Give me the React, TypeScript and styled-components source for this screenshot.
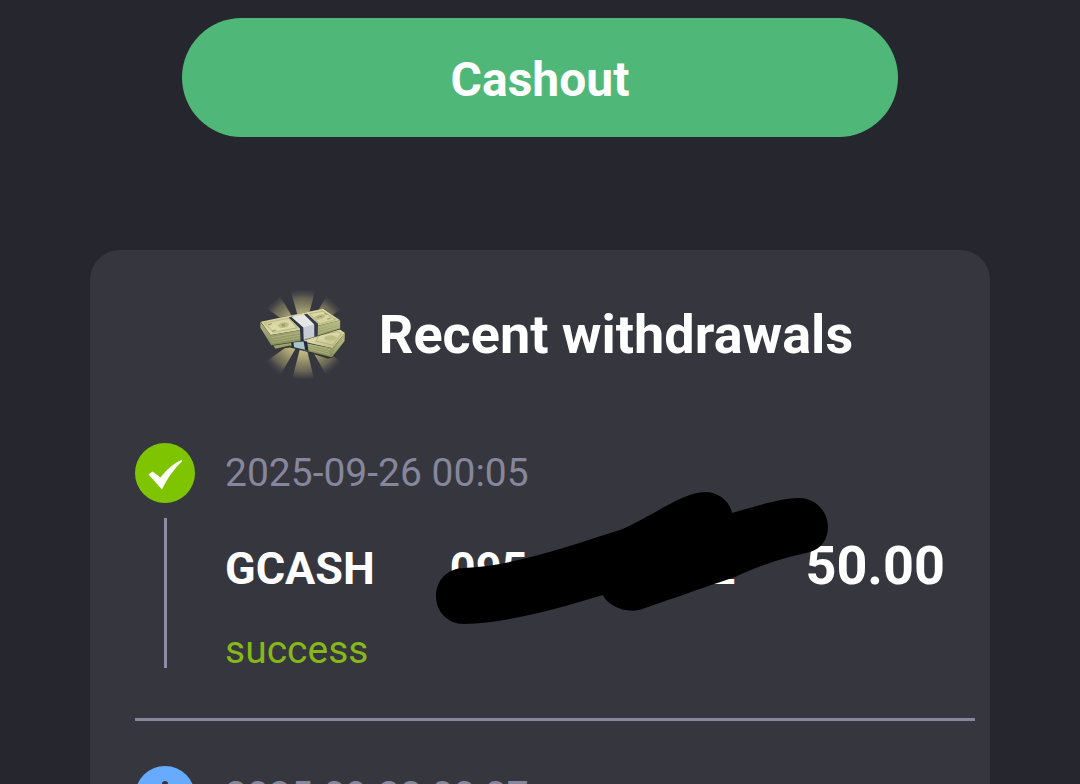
import React from "react";
import styled, { createGlobalStyle } from "styled-components";

const GlobalStyle = createGlobalStyle`
  * { box-sizing: border-box; }
  html { scrollbar-width: none; background: #26262f; }
  body {
    margin: 0;
    background: #26262f;
    color: #ffffff;
    font-family: Roboto, "Liberation Sans", sans-serif;
  }
`;

const Screen = styled.main`
  display: flex;
  flex-direction: column;
  align-items: center;
  height: 100vh;
  padding: 18px 90px 0;
  overflow: hidden;
`;

const CashoutButton = styled.button`
  flex: none;
  width: 100%;
  max-width: 716px;
  height: 119px;
  padding: 4px 0 0;
  border: 0;
  border-radius: 60px;
  background: #4fb878;
  color: #ffffff;
  font: 700 48px/56px Roboto, "Liberation Sans", sans-serif;
  cursor: pointer;
`;

const Card = styled.section`
  flex: none;
  width: 100%;
  margin-top: 113px;
  padding: 40px 15px 45px 45px;
  border-radius: 30px;
  background: #36363f;
`;

const CardHeader = styled.header`
  display: flex;
  align-items: center;
  justify-content: center;
  gap: 30px;
  height: 90px;
`;

const Title = styled.h2`
  margin: 0;
  font-size: 54px;
  font-weight: 700;
  line-height: 64px;
  white-space: nowrap;
`;

const List = styled.ul`
  margin: 63px 0 0;
  padding: 0;
  list-style: none;
`;

const Item = styled.li`
  display: flex;
  gap: 30px;
  margin-bottom: 45px;
  padding-bottom: 50px;
  border-bottom: 3px solid #86869c;
`;

const Rail = styled.div`
  display: flex;
  flex: none;
  flex-direction: column;
  align-items: center;
  gap: 15px;
  width: 60px;
`;

const RailLine = styled.div`
  width: 3px;
  height: 150px;
  background: #8c8ca6;
`;

const Details = styled.div`
  flex: 1;
  padding-right: 30px;
`;

const DateText = styled.time`
  display: block;
  color: #86869c;
  font-size: 39px;
  line-height: 60px;
`;

const Payment = styled.div`
  display: flex;
  align-items: baseline;
  height: 64px;
  margin-top: 31px;
  font-size: 45px;
  font-weight: 700;
  line-height: 64px;
`;

const Account = styled.span`
  position: relative;
  display: flex;
  justify-content: space-between;
  width: 286px;
  margin-left: 75px;
`;

const Redaction = styled.svg`
  position: absolute;
  top: -47px;
  left: -16px;
  width: 396px;
  height: 136px;
`;

const Amount = styled.span`
  margin-left: auto;
  font-size: 54px;
`;

const Status = styled.p`
  margin: 34px 0 0;
  color: #86b817;
  font-size: 39px;
  line-height: 36px;
`;

function MoneyIcon() {
  return (
    <svg width="92" height="92" viewBox="54 30 270 270" aria-hidden="true">
      <defs>
        <radialGradient id="ray" gradientUnits="userSpaceOnUse" cx="190" cy="165" r="135">
          <stop offset="0" stopColor="#f2edaa" />
          <stop offset="0.5" stopColor="#a8a373" />
          <stop offset="0.8" stopColor="#77745d" stopOpacity="0.75" />
          <stop offset="1" stopColor="#4b4a48" stopOpacity="0.1" />
        </radialGradient>
        <linearGradient id="billTop" x1="0" y1="0" x2="1" y2="1">
          <stop offset="0" stopColor="#c8c894" />
          <stop offset="0.5" stopColor="#dedbac" />
          <stop offset="1" stopColor="#b9b982" />
        </linearGradient>
        <linearGradient id="billSide" x1="0" y1="0" x2="0" y2="1">
          <stop offset="0" stopColor="#b4b880" />
          <stop offset="1" stopColor="#868d5e" />
        </linearGradient>
      </defs>
      <g fill="url(#ray)">
        <path d="M190 165 152 34 225 34Z" />
        <path d="M190 165 158 292 221 292Z" />
        <path d="M190 165 82 86 122 52Z" />
        <path d="M190 165 258 52 300 90Z" />
        <path d="M190 165 78 244 122 284Z" />
        <path d="M190 165 258 284 302 244Z" />
      </g>
      <path d="M100 192 185 168 298 150 314 160 313 186 276 232 262 235 195 213 150 202 108 207Z" fill="#35382d" />
      <path d="M102 188 190 164 296 148 312 159 276 204 188 184Z" fill="url(#billTop)" />
      <path d="M98 190 155 181 276 204 312 159 311 183 274 230 190 209 150 196 108 205Z" fill="url(#billSide)" />
      <path d="m202 192 68 17m-68-11 66 18m-66-11 66 17m12-13 30-37m-31 45 30-38" fill="none" stroke="#c4c78e" strokeWidth="2" opacity="0.7" />
      <path d="m236 166 56-11 10 6-25 34-50-12Z" fill="none" stroke="#b5b47c" strokeWidth="3" />
      <ellipse cx="269" cy="174" rx="18" ry="8" fill="#bebd86" />
      <path d="m153 184 9-7 39 7 4 28-17-3-32-9Z" fill="#222a3d" />
      <path d="m160 182 31 3 4 23-32-7Z" fill="#a8c7c8" />
      <path d="M61 136 95 197 182 184 299 148 299 122 250 88 68 125Z" fill="#3a3d2d" />
      <path d="m65 126 183-38 50 34-109 27-95 16Z" fill="url(#billTop)" />
      <path d="m64 127 30 39 97-17 107-27v24l-109 35-93 14-32-51Z" fill="url(#billSide)" />
      <path d="m96 173 88-16m-88 24 88-16m-87 23 87-16M234 144l62-17m-62 25 62-18m-62 26 62-19" fill="none" stroke="#c9ca95" strokeWidth="2" opacity="0.6" />
      <path d="m76 130 71-14 25 28-70 13Z" fill="none" stroke="#bab881" strokeWidth="3" />
      <path d="m209 103 38-8 37 25-47 13Z" fill="none" stroke="#bab881" strokeWidth="3" />
      <ellipse cx="132" cy="136" rx="16" ry="8" fill="#bebc85" transform="rotate(-9 132 136)" />
      <path d="m126 132 10 8m-9 0 9-9M86 135l12-3m0 21 12-3" stroke="#9c9a62" strokeWidth="3" />
      <ellipse cx="238" cy="112" rx="17" ry="7" fill="#bebc85" transform="rotate(-15 238 112)" />
      <path d="m230 114 16-5m6-8 8 5m0 13 10-3" stroke="#9c9a62" strokeWidth="3" />
      <path d="m147 114 13-3 31 32 1 38-10 3-2-38Z" fill="#2d3542" />
      <path d="m191 105 10-2 32 29-1 35-10 4-2-38Z" fill="#343a46" />
      <path d="m155 112 37-7 30 29-32 9Z" fill="#e4e7e5" />
      <path d="m190 143 32-9v36l-31 8Z" fill="#c6cbd5" />
    </svg>
  );
}

function SuccessIcon() {
  return (
    <svg width="60" height="60" viewBox="0 0 60 60" role="img" aria-label="Success">
      <circle cx="30" cy="30" r="30" fill="#7fc400" />
      <path d="M13.5 31.5 17.5 28.5 25.5 34.5 C31 27.5 38 20.5 46.5 17 L47 18.5 C40 25 33 34 27 46.5Z" fill="#fff" />
    </svg>
  );
}

function PendingIcon() {
  return (
    <svg width="60" height="60" viewBox="0 0 60 60" role="img" aria-label="Pending">
      <circle cx="30" cy="30" r="30" fill="#66abff" />
      <path d="M30 18V31L39 37" fill="none" stroke="#36363f" strokeWidth="6" strokeLinecap="round" strokeLinejoin="round" />
    </svg>
  );
}

export default function App() {
  return (
    <>
      <GlobalStyle />
      <Screen>
        <CashoutButton type="button">Cashout</CashoutButton>
        <Card>
          <CardHeader>
            <MoneyIcon />
            <Title>Recent withdrawals</Title>
          </CardHeader>
          <List>
            <Item>
              <Rail>
                <SuccessIcon />
                <RailLine />
              </Rail>
              <Details>
                <DateText>2025-09-26 00:05</DateText>
                <Payment>
                  <span>GCASH</span>
                  <Account>
                    <span>095</span>
                    <span>2</span>
                    <Redaction viewBox="434 490 396 136" aria-hidden="true">
                      <path
                        d="M464 624C448 624 436 612 436 596S448 568 464 568C520 565 574 544 620 530C650 518 682 492 705 492C718 492 730 501 732 513C756 506 782 498 799 498C815 498 828 511 828 527C828 539 821 549 810 552C786 557 758 566 735 577C708 586 663 602 639 610C624 613 607 605 603 595C556 609 508 623 464 624Z"
                        fill="#000"
                      />
                    </Redaction>
                  </Account>
                  <Amount>50.00</Amount>
                </Payment>
                <Status>success</Status>
              </Details>
            </Item>
            <Item>
              <Rail>
                <PendingIcon />
              </Rail>
              <Details>
                <DateText>2025-09-23 00:07</DateText>
              </Details>
            </Item>
          </List>
        </Card>
      </Screen>
    </>
  );
}
